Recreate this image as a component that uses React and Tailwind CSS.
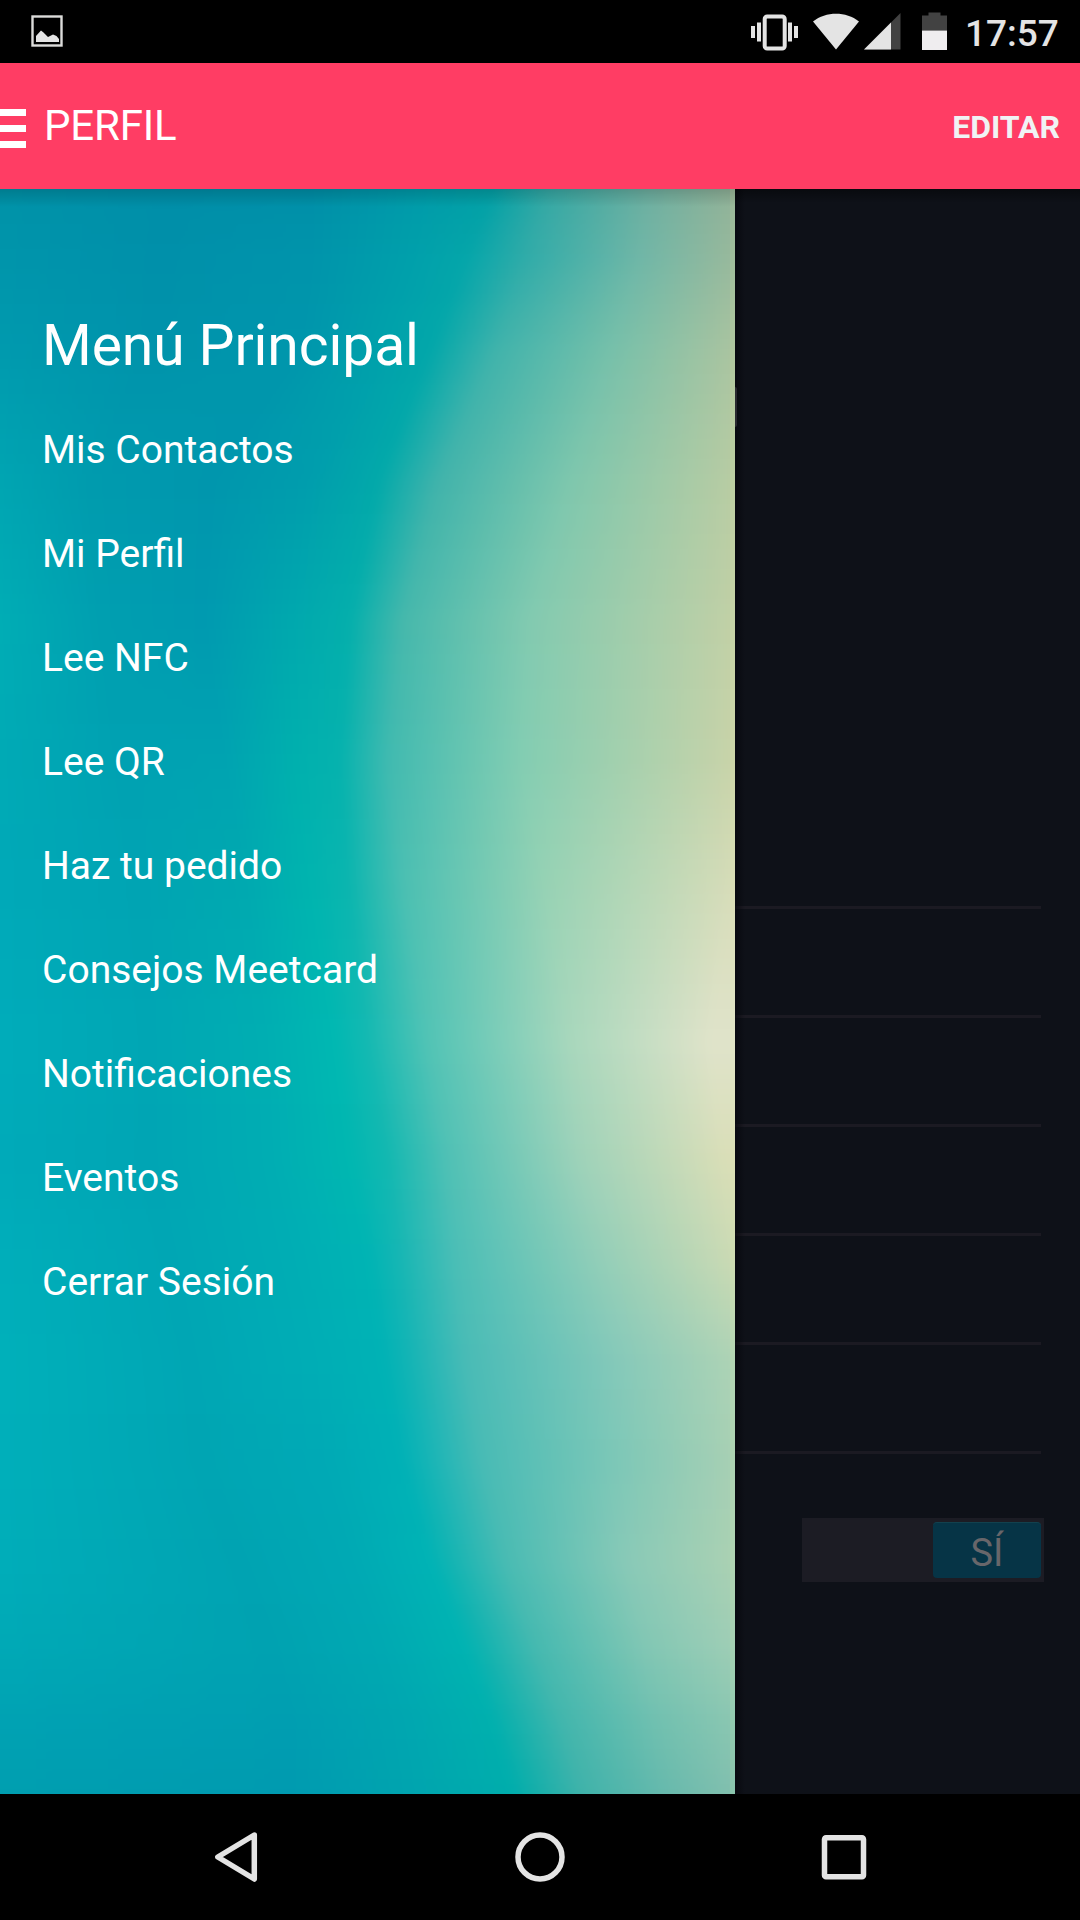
import React from "react";

const menuItems = [
  "Mis Contactos",
  "Mi Perfil",
  "Lee NFC",
  "Lee QR",
  "Haz tu pedido",
  "Consejos Meetcard",
  "Notificaciones",
  "Eventos",
  "Cerrar Sesión",
];

// Wallpaper rows: [y, [x, colour] * 8], measured inside the drawer
const wallpaperRows = [
  [0, [0, "0092a8"], [170, "008ea8"], [310, "008fa8"], [420, "009ba9"], [492, "03a0a6"], [550, "36a8a4"], [650, "6eafa0"], [735, "92b298"]],
  [70, [0, "0095ab"], [160, "0090aa"], [310, "0094ab"], [410, "00a0ab"], [464, "04a6aa"], [525, "30aca9"], [640, "70b7a7"], [735, "99b99c"]],
  [160, [0, "009aae"], [150, "0093ab"], [300, "0096ac"], [380, "00a1ab"], [430, "02a7aa"], [495, "40b3ab"], [610, "76c0aa"], [735, "abc4a0"]],
  [290, [0, "00a5b2"], [90, "009bae"], [210, "0096ad"], [305, "009dad"], [378, "02a9aa"], [437, "40b3ab"], [570, "7ec7ad"], [735, "b9cca3"]],
  [430, [0, "00adb5"], [100, "009fb0"], [205, "009ab0"], [290, "00a8ae"], [350, "04afac"], [402, "45b8ac"], [530, "82cab0"], [735, "c2d0a6"]],
  [570, [0, "00aab5"], [120, "00a1b2"], [225, "00a3b1"], [295, "00b0ae"], [340, "05b2ae"], [388, "40bab0"], [520, "82cdb2"], [735, "c9d3a9"]],
  [690, [0, "00a9b8"], [140, "00a4b3"], [245, "00a9b0"], [310, "00b4af"], [348, "0ab5af"], [402, "4abfb2"], [545, "96d2b4"], [735, "d7dcb8"]],
  [850, [0, "00acba"], [150, "00a6b4"], [265, "00aeb2"], [335, "00b8b2"], [368, "14b9b2"], [426, "50c3b5"], [570, "a8d7bc"], [710, "dfe3ca"]],
  [970, [0, "00aab9"], [150, "00a5b4"], [270, "00adb3"], [350, "00b7b1"], [388, "12b8b1"], [446, "4ec0b5"], [580, "9ed2b9"], [725, "d9deb7"]],
  [1070, [0, "00aeba"], [170, "00a6b4"], [290, "00adb4"], [370, "00b4b4"], [400, "16b6b4"], [455, "4abeb6"], [600, "92ceb8"], [735, "cbdab4"]],
  [1170, [0, "00b0ba"], [190, "00a6b4"], [310, "00adb5"], [384, "00b2b5"], [408, "12b4b5"], [465, "48bbb6"], [620, "86c9b9"], [735, "aed3b5"]],
  [1270, [0, "00afba"], [200, "00a5b3"], [320, "00a9b5"], [402, "00b1b6"], [424, "12b4b6"], [482, "48bbb5"], [610, "7ac7b7"], [735, "a8d0b4"]],
  [1370, [0, "00adb9"], [240, "00a3b2"], [350, "00a9b4"], [430, "00b3b5"], [450, "12b4b3"], [505, "48bbb3"], [625, "88c9b7"], [735, "abd1b3"]],
  [1450, [0, "00a9b6"], [270, "00a2b1"], [380, "00a9b2"], [462, "00b3b2"], [482, "12b3b0"], [532, "44b9b0"], [645, "82c7b4"], [735, "a0ceb5"]],
  [1530, [0, "00a2b3"], [290, "009eb1"], [400, "00a6b0"], [492, "00b0ae"], [512, "12b1ad"], [562, "42b6ad"], [655, "70c0b0"], [735, "8bc7b1"]],
  [1605, [0, "009eb0"], [290, "009ab0"], [410, "00a4af"], [514, "00adac"], [536, "14aeaa"], [582, "3eb2aa"], [665, "66b9ac"], [735, "82bfae"]],
];

const STRIP = 5;

const mixColor = (a, b, t) => {
  const parts = [0, 2, 4].map((i) => {
    const from = parseInt(a.slice(i, i + 2), 16);
    const to = parseInt(b.slice(i, i + 2), 16);
    return Math.round(from + (to - from) * t);
  });
  return `rgb(${parts.join(",")})`;
};

const stopsAt = (y) => {
  let i = 0;
  while (i < wallpaperRows.length - 2 && wallpaperRows[i + 1][0] <= y) i++;
  const [y0, ...from] = wallpaperRows[i];
  const [y1, ...to] = wallpaperRows[i + 1];
  const t = (y - y0) / (y1 - y0);
  return from.map(([x, color], n) => ({
    offset: (x + (to[n][0] - x) * t) / 735,
    color: mixColor(color, to[n][1], t),
  }));
};

const strips = Array.from({ length: 321 }, (_, i) => i * STRIP);

const Wallpaper = () => (
  <svg className="absolute inset-0 h-full w-full" viewBox="0 0 735 1605" preserveAspectRatio="none">
    <defs>
      <filter
        id="soft"
        filterUnits="userSpaceOnUse"
        x="-40"
        y="-40"
        width="815"
        height="1685"
        colorInterpolationFilters="sRGB"
      >
        <feGaussianBlur stdDeviation="5" />
      </filter>
      {strips.map((y) => (
        <linearGradient key={y} id={`strip-${y}`} gradientUnits="userSpaceOnUse" x1="0" y1="0" x2="735" y2="0">
          {stopsAt(y).map((stop, n) => (
            <stop key={n} offset={stop.offset} stopColor={stop.color} />
          ))}
        </linearGradient>
      ))}
    </defs>
    <g filter="url(#soft)">
      <rect x="-40" y="-40" width="815" height="45" fill="url(#strip-0)" />
      {strips.map((y) => (
        <rect key={y} x="-40" y={y} width="815" height={y === 1600 ? 45 : STRIP + 1} fill={`url(#strip-${y})`} />
      ))}
    </g>
  </svg>
);

const StatusBar = () => (
  <div className="flex h-[63px] items-center justify-between bg-black pl-[31px] pr-[22px]">
    <svg width="33" height="33" viewBox="0 0 33 33">
      <rect x="1.5" y="1.5" width="29" height="29" fill="none" stroke="#dcdcda" strokeWidth="2.4" />
      <path d="M5 27V21L10 15.5L12.5 17.5L17 22L22 19.5L25.5 21L28 24V27Z" fill="#e4e4e4" />
    </svg>
    <div className="flex items-center">
      <svg width="200" height="40" viewBox="0 0 200 40" fill="#e4e4e4">
        {/* Vibrate */}
        <rect x="1" y="14" width="4" height="12" />
        <rect x="7" y="10.5" width="4" height="19" />
        <rect x="14.7" y="4.5" width="20" height="32" rx="2.5" fill="none" stroke="#e4e4e4" strokeWidth="4" />
        <rect x="38" y="10.5" width="4" height="19" />
        <rect x="44" y="14" width="4" height="12" />
        {/* Wifi */}
        <path d="M63 9.5C76 -.8 96 -.8 109 9.5L86 37.5Z" />
        {/* Signal */}
        <path d="M114 37.5L150.5 1V37.5Z" fill="#424242" />
        <path d="M114 37.5L141 10.5V37.5Z" />
        {/* Battery */}
        <path d="M172 18.5V3.5H178.5V.5H190.5V3.5H197V18.5Z" fill="#424242" />
        <rect x="172" y="18.5" width="25" height="19.5" fill="#efedef" />
      </svg>
      <span className="ml-[15px] mt-[3px] w-[93px] whitespace-nowrap text-[37px] font-medium leading-none text-[#e4e4e4]">17:57</span>
    </div>
  </div>
);

const Header = () => (
  <header className="flex h-[126px] items-center bg-[#ff3d64] pr-[20px] text-white">
    <div className="mt-[5px] flex w-[26px] flex-col gap-[9px]">
      <span className="h-[7px] bg-white" />
      <span className="h-[7px] bg-white" />
      <span className="h-[7px] bg-white" />
    </div>
    <h1 className="ml-[18px] text-[42px] leading-none tracking-[-0.2px]">PERFIL</h1>
    <button className="ml-auto mt-[2px] text-[32px] font-bold leading-none text-[#f0f3f4]">EDITAR</button>
  </header>
);

const Drawer = () => (
  <aside className="relative w-[735px] shrink-0 overflow-hidden bg-[#00a5b3]">
    <Wallpaper />
    <div className="absolute inset-x-0 top-0 h-[18px] bg-linear-to-b from-black/15 to-transparent" />
    <div className="absolute inset-y-0 right-0 w-[5px] bg-[#ffffa0]/8" />
    <nav className="relative pl-[42px] pt-[117px] text-white">
      <h2 className="text-[57px] leading-[80px] tracking-[-0.1px]">Menú Principal</h2>
      <ul className="mt-[12px]">
        {menuItems.map((item) => (
          <li key={item} className="flex h-[104px] items-center text-[39px]">
            {item}
          </li>
        ))}
      </ul>
    </nav>
  </aside>
);

const Profile = () => (
  <section className="relative flex-1 bg-[#0e1118]">
    <div className="flex flex-col gap-[106px] pr-[39px] pt-[717px]">
      {[1, 2, 3, 4, 5, 6].map((row) => (
        <div key={row} className="h-[3px] bg-[#1b1a22]" />
      ))}
    </div>
    <div className="ml-[67px] mt-[64px] flex h-[64px] w-[242px] justify-end bg-[#1c1c24] p-[4px] pr-[3px]">
      <div className="flex h-[56px] w-[108px] items-center justify-center rounded-[4px] border-t border-[#12414e] bg-[#063446] pt-[4px] text-[38px] leading-none text-[#68666a]">
        SÍ
      </div>
    </div>
    {/* Shadows cast by the drawer and the header */}
    <div className="absolute inset-y-0 left-0 w-[10px] bg-linear-to-r from-[#06060c]/70 to-transparent" />
    <div className="absolute inset-x-0 top-0 h-[14px] bg-linear-to-b from-black/40 to-transparent" />
    <div className="absolute left-0 top-[198px] h-[40px] w-[2px] rounded-r-full bg-[#2a2a30]" />
  </section>
);

const NavBar = () => (
  <div className="h-[126px] bg-black">
    <svg width="1080" height="126" fill="none" stroke="#e4e4e4" strokeWidth="5.5" strokeLinejoin="round">
      <path d="M254.3 41L217.8 63L254.3 85Z" />
      <circle cx="540" cy="63" r="22" />
      <rect x="824.5" y="43.7" width="39" height="39" rx="1.5" />
    </svg>
  </div>
);

const App = () => {
  return (
    <div className="flex h-[1920px] w-[1080px] flex-col overflow-hidden bg-black font-[Roboto,sans-serif]">
      <StatusBar />
      <Header />
      <main className="flex flex-1">
        <Drawer />
        <Profile />
      </main>
      <NavBar />
    </div>
  );
};

export default App;
